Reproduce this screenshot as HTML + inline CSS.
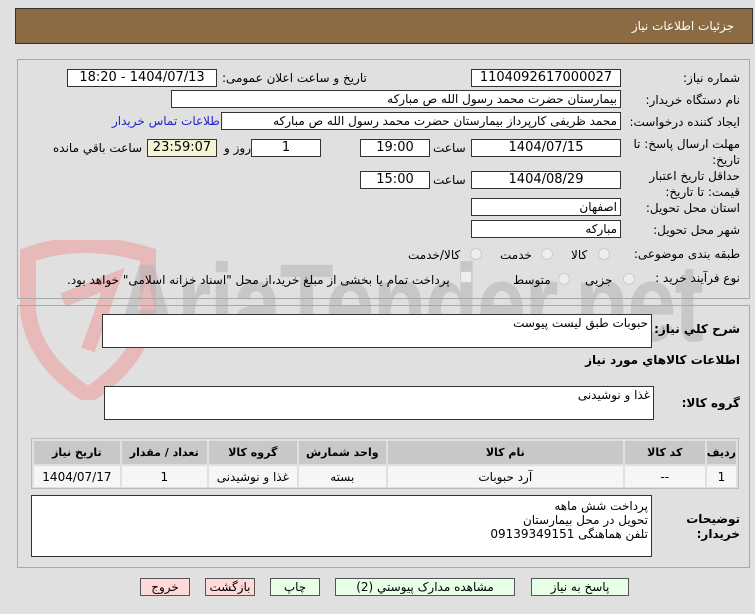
<!DOCTYPE html>
<html dir="rtl"><head><meta charset="utf-8">
<style>
*{box-sizing:border-box;margin:0;padding:0}
body{width:755px;height:614px;background:#e0e0e0;font-family:Tahoma,"DejaVu Sans","Liberation Sans",sans-serif;font-size:12px;color:#000;position:relative;overflow:hidden}
.a{position:absolute}
.hdr{left:15px;top:8px;width:738px;height:36px;background:#8b6b43;border:1px solid #333}
.hdr span{position:absolute;right:18px;top:10px;color:#fff;font-size:12px}
.pn{border:1px solid #a8a8a8}
.in{position:absolute;background:#fff;border:1px solid #333;height:18px;line-height:16px;padding:0 3px;text-align:right;font-size:12px;white-space:nowrap;overflow:hidden}
.c{text-align:center;font-size:13px}
.lb{position:absolute;white-space:nowrap;font-size:12px}
.b{font-weight:bold}
.rd{position:absolute;width:12px;height:12px;border-radius:50%;border:1px solid #ccc;background:#eee}
table{border-collapse:separate;border-spacing:2px;font-size:11px}
th{background:#c8c8c8;height:23px;font-weight:bold}
td{background:#f6f6f6;height:21px;text-align:center;font-size:12px}
.btn{position:absolute;top:578px;height:18px;border:1px solid #555;background:#e6ffe6;text-align:center;line-height:16px;font-size:12px}
.pk{background:#ffd9d9}
</style></head><body>
<div class="a hdr"><span>جزئیات اطلاعات نیاز</span></div>

<svg class="a" style="left:18px;top:240px" width="140" height="160" viewBox="0 0 140 160"><path d="M10 15 Q65 -5 130 15 L130 70 Q125 120 70 155 Q15 120 10 70 Z" fill="none" stroke="#e7b9b9" stroke-width="16"/><path d="M45 60 L95 40 L70 110" fill="none" stroke="#e7b9b9" stroke-width="14"/></svg>
<div class="a" style="left:115px;top:240px;font-size:110px;font-family:'Liberation Sans',sans-serif;font-weight:bold;color:#b4b4b4;opacity:.55;direction:ltr;letter-spacing:-2px;transform:scaleX(.8);transform-origin:left">AriaTender.net</div>

<div class="a pn" style="left:17px;top:59px;width:733px;height:240px"></div>
<div class="a pn" style="left:17px;top:305px;width:733px;height:263px"></div>

<div class="lb" style="right:15px;top:71px">شماره نیاز:</div>
<div class="in c" style="left:471px;top:69px;width:150px">1104092617000027</div>
<div class="lb" style="left:222px;top:71px">تاریخ و ساعت اعلان عمومی:</div>
<div class="in c" style="left:67px;top:69px;width:150px">1404/07/13 - 18:20</div>

<div class="lb" style="right:15px;top:93px">نام دستگاه خریدار:</div>
<div class="in" style="left:171px;top:90px;width:450px">بیمارستان حضرت محمد رسول الله  ص  مبارکه</div>

<div class="lb" style="right:15px;top:115px">ایجاد کننده درخواست:</div>
<div class="in" style="left:221px;top:112px;width:400px">محمد ظریفی کارپرداز بیمارستان حضرت محمد رسول الله  ص  مبارکه</div>
<div class="lb" style="left:112px;top:114px;color:#2222cc">اطلاعات تماس خریدار</div>

<div class="lb" style="right:15px;top:136px;line-height:16px">مهلت ارسال پاسخ: تا<br>تاریخ:</div>
<div class="in c" style="left:471px;top:139px;width:150px">1404/07/15</div>
<div class="lb" style="left:433px;top:141px">ساعت</div>
<div class="in c" style="left:360px;top:139px;width:70px">19:00</div>
<div class="in c" style="left:251px;top:139px;width:70px">1</div>
<div class="lb" style="left:224px;top:141px">روز و</div>
<div class="in c" style="left:147px;top:139px;width:70px;background:#f5f5d5">23:59:07</div>
<div class="lb" style="left:53px;top:141px">ساعت باقي مانده</div>

<div class="lb" style="right:15px;top:168px;line-height:16px">حداقل تاریخ اعتبار<br>قیمت: تا تاریخ:</div>
<div class="in c" style="left:471px;top:171px;width:150px">1404/08/29</div>
<div class="lb" style="left:433px;top:173px">ساعت</div>
<div class="in c" style="left:360px;top:171px;width:70px">15:00</div>

<div class="lb" style="right:15px;top:201px">استان محل تحویل:</div>
<div class="in" style="left:471px;top:198px;width:150px">اصفهان</div>
<div class="lb" style="right:15px;top:223px">شهر محل تحویل:</div>
<div class="in" style="left:471px;top:220px;width:150px">مبارکه</div>

<div class="lb" style="right:15px;top:247px">طبقه بندی موضوعی:</div>
<div class="rd" style="left:598px;top:248px"></div><div class="lb" style="left:571px;top:248px">کالا</div>
<div class="rd" style="left:541px;top:248px"></div><div class="lb" style="left:500px;top:248px">خدمت</div>
<div class="rd" style="left:470px;top:248px"></div><div class="lb" style="left:408px;top:248px">کالا/خدمت</div>

<div class="lb" style="right:15px;top:271px">نوع فرآیند خرید :</div>
<div class="rd" style="left:623px;top:273px"></div><div class="lb" style="left:585px;top:273px">جزیی</div>
<div class="rd" style="left:558px;top:273px"></div><div class="lb" style="left:513px;top:273px">متوسط</div>
<div class="a" style="left:460px;top:271px;width:12px;height:12px;border:1px solid #ccc;background:#eee;border-radius:2px"></div>
<div class="lb" style="left:67px;top:273px">پرداخت تمام یا بخشی از مبلغ خرید،از محل "اسناد خزانه اسلامی" خواهد بود.</div>

<div class="lb b" style="right:15px;top:322px">شرح کلي نياز:</div>
<div class="in" style="left:102px;top:314px;width:550px;height:34px;background:#fff">حبوبات  طبق لیست پیوست</div>
<div class="lb b" style="right:15px;top:353px">اطلاعات كالاهاي مورد نياز</div>
<div class="lb b" style="right:15px;top:396px">گروه کالا:</div>
<div class="in" style="left:104px;top:386px;width:550px;height:34px">غذا و نوشیدنی</div>

<div class="a" style="left:31px;top:438px;width:708px;height:51px;border:1px solid #bbb">
<table style="width:706px"><tr><th style="width:27px">ردیف</th><th style="width:80px">کد کالا</th><th style="width:235px">نام کالا</th><th style="width:87px">واحد شمارش</th><th style="width:88px">گروه کالا</th><th style="width:85px">تعداد / مقدار</th><th>تاریخ نیاز</th></tr>
<tr><td>1</td><td>--</td><td>آرد حبوبات</td><td>بسته</td><td>غذا و نوشیدنی</td><td>1</td><td>1404/07/17</td></tr></table></div>

<div class="lb b" style="right:15px;top:512px;line-height:15px">توضیحات<br>خریدار:</div>
<div class="in" style="left:31px;top:495px;width:621px;height:62px;line-height:14px;white-space:normal;padding-top:3px">پرداخت شش ماهه<br>تحویل در محل بیمارستان<br>تلفن هماهنگی 09139349151</div>

<div class="btn" style="left:531px;width:98px">پاسخ به نیاز</div>
<div class="btn" style="left:335px;width:180px">مشاهده مدارک پیوستي (2)</div>
<div class="btn" style="left:270px;width:50px">چاپ</div>
<div class="btn pk" style="left:205px;width:50px">بازگشت</div>
<div class="btn pk" style="left:140px;width:50px">خروج</div>
</body></html>
